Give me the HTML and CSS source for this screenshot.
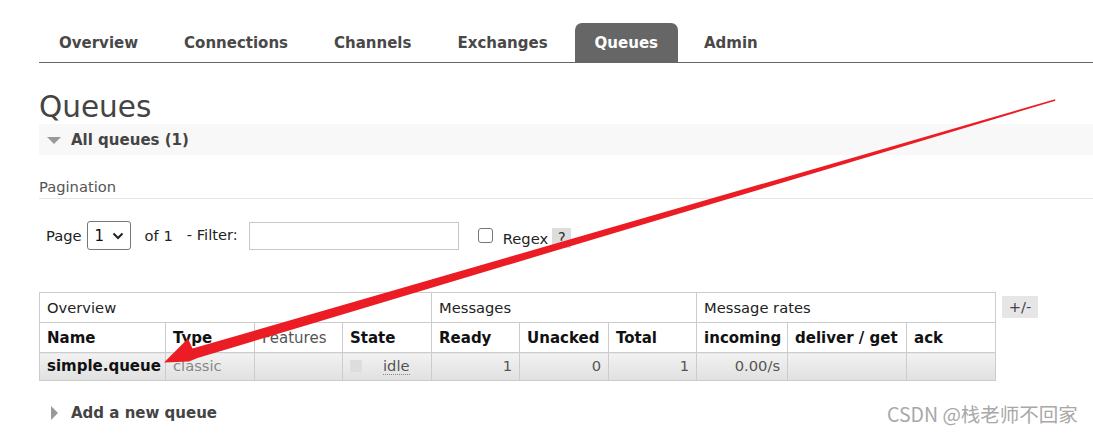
FILE: index.html
```html
<!DOCTYPE html>
<html>
<head>
<meta charset="utf-8">
<link rel="stylesheet" href="styles.css">
</head>
<body>
<div class="page">
  <nav class="tabs">
    <span class="tab">Overview</span>
    <span class="tab">Connections</span>
    <span class="tab">Channels</span>
    <span class="tab">Exchanges</span>
    <span class="tab active">Queues</span>
    <span class="tab">Admin</span>
  </nav>

  <h1 class="title">Queues</h1>

  <div class="section-bar">
    <span class="tri-down"></span>
    <span class="section-title">All queues (1)</span>
  </div>

  <h3 class="pag-title">Pagination</h3>

  <div class="controls">
    <span class="lbl-page">Page</span>
    <span class="select"><span class="sel-val">1</span><svg class="chev" width="12" height="8" viewBox="0 0 12 8"><path d="M1.5 1.5 L6 6 L10.5 1.5" fill="none" stroke="#222" stroke-width="2"/></svg></span>
    <span class="lbl-of">of 1</span>
    <span class="lbl-filter">- Filter:</span>
    <span class="input"></span>
    <span class="checkbox"></span>
    <span class="lbl-regex">Regex</span>
    <span class="help">?</span>
  </div>

  <div class="table-wrap">
    <table class="queues">
      <colgroup>
        <col class="c-name"><col class="c-type"><col class="c-feat"><col class="c-state">
        <col class="c-ready"><col class="c-unack"><col class="c-total">
        <col class="c-inc"><col class="c-deliv"><col class="c-ack">
      </colgroup>
      <thead>
        <tr class="group">
          <th colspan="4">Overview</th>
          <th colspan="3">Messages</th>
          <th colspan="3">Message rates</th>
        </tr>
        <tr class="heads">
          <th>Name</th><th>Type</th><th class="light">Features</th><th>State</th>
          <th>Ready</th><th>Unacked</th><th>Total</th>
          <th>incoming</th><th>deliver / get</th><th>ack</th>
        </tr>
      </thead>
      <tbody>
        <tr class="data">
          <td class="name">simple.queue</td>
          <td class="type">classic</td>
          <td></td>
          <td class="state"><span class="state-box"></span><span class="idle">idle</span></td>
          <td class="num">1</td>
          <td class="num">0</td>
          <td class="num">1</td>
          <td class="num">0.00/s</td>
          <td></td>
          <td></td>
        </tr>
      </tbody>
    </table>
    <span class="plusminus">+/-</span>
  </div>

  <div class="add-row">
    <span class="tri-right"></span>
    <span class="add-title">Add a new queue</span>
  </div>
</div>

<div class="watermark">CSDN @栈老师不回家</div>

<svg class="arrow" width="1093" height="436" viewBox="0 0 1093 436">
  <polygon fill="#ec1c24" points="164,362.5 188,338.5 192.5,348.5 1055,99.2 1055.4,100.8 197.5,358 189,361.5"/>
</svg>
</body>
</html>
```

FILE: styles.css
```css
html, body {
  margin: 0;
  padding: 0;
  background: #fff;
}
body {
  font-family: "DejaVu Sans", Verdana, sans-serif;
  font-size: 14.7px;
  color: #444;
  position: relative;
  width: 1093px;
  height: 436px;
  overflow: hidden;
}
.page {
  padding: 23px 0 0 39px;
}
.tabs {
  display: flex;
  height: 39px;
  border-bottom: 1px solid #666;
}
.tab {
  padding: 1px 20px 0;
  margin-right: 6px;
  line-height: 38px;
  font-weight: bold;
  font-size: 15px;
  color: #484848;
}
.tab:first-child + .tab + .tab + .tab + .tab {
  margin-left: 1px;
}
.tab.active {
  background: #666;
  color: #fff;
  border-radius: 7px 7px 0 0;
}
.title {
  margin: 28px 0 0;
  font-size: 29.5px;
  line-height: 33px;
  font-weight: normal;
  color: #444;
}
.section-bar {
  display: flex;
  align-items: center;
  height: 31px;
  background: #f8f8f8;
  padding-left: 8px;
}
.tri-down {
  width: 0;
  height: 0;
  border-left: 7px solid transparent;
  border-right: 7px solid transparent;
  border-top: 7px solid #999;
  margin-right: 10px;
  margin-top: 1px;
}
.section-title {
  font-weight: bold;
  font-size: 15px;
  color: #444;
}
.pag-title {
  margin: 22px 0 0;
  font-size: 14.7px;
  line-height: 20px;
  font-weight: normal;
  color: #555;
  padding-bottom: 1px;
  border-bottom: 1px solid #e4e4e4;
}
.controls {
  display: flex;
  align-items: center;
  height: 29px;
  margin-top: 22px;
  padding-left: 7px;
  color: #222;
}
.lbl-page { margin-right: 5px; }
.select {
  display: flex;
  align-items: center;
  box-sizing: border-box;
  width: 44px;
  height: 29px;
  border: 1px solid #767676;
  border-radius: 3px;
  padding-left: 7px;
  font-size: 15px;
  color: #111;
}
.sel-val { margin-right: 8px; }
.chev { display: block; }
.lbl-of { margin-left: 14px; }
.lbl-filter { margin-left: 14px; margin-top: -2px; }
.input {
  box-sizing: border-box;
  width: 210px;
  height: 28px;
  margin-left: 11px;
  border: 1px solid #c8c8c8;
  background: #fff;
}
.checkbox {
  box-sizing: border-box;
  width: 15px;
  height: 15px;
  margin-left: 19px;
  margin-top: -1px;
  border: 1px solid #767676;
  border-radius: 3px;
}
.lbl-regex { margin-left: 10px; margin-top: 5px; }
.help {
  margin-left: 4px;
  margin-top: 5px;
  width: 19px;
  height: 20px;
  line-height: 22px;
  font-size: 15px;
  text-align: center;
  background: #ddd;
  color: #333;
}
.table-wrap {
  display: flex;
  align-items: flex-start;
  margin-top: 42px;
}
.queues {
  border-collapse: collapse;
  table-layout: fixed;
  width: 956px;
}
.c-name { width: 126px; }
.c-type { width: 89px; }
.c-feat { width: 88px; }
.c-state { width: 89px; }
.c-ready { width: 88px; }
.c-unack { width: 89px; }
.c-total { width: 88px; }
.c-inc { width: 91px; }
.c-deliv { width: 119px; }
.c-ack { width: 89px; }
.queues th, .queues td {
  border: 1px solid #ccc;
  padding: 0 7px;
  text-align: left;
  white-space: nowrap;
  overflow: hidden;
}
.group th {
  height: 29px;
  font-weight: normal;
  font-size: 14.7px;
  color: #222;
}
.heads th {
  height: 29px;
  font-weight: bold;
  font-size: 15px;
  color: #111;
}
.heads th.light {
  font-weight: normal;
  color: #555;
}
.data td {
  height: 25px;
  padding-bottom: 2px;
  background: linear-gradient(#f2f2f2, #e0e0e0);
  color: #555;
  font-size: 14.7px;
}
.data td.name {
  font-weight: bold;
  font-size: 15px;
  color: #111;
}
.data td.type { color: #888; }
.data td.num { text-align: right; }
.state-box {
  display: inline-block;
  width: 12px;
  height: 12px;
  background: #ddd;
  vertical-align: -1px;
  margin-right: 21px;
}
.idle {
  color: #555;
  border-bottom: 1px dotted #888;
}
.plusminus {
  margin-left: 6px;
  margin-top: 4px;
  width: 36px;
  height: 22px;
  line-height: 22px;
  text-align: center;
  background: #e6e6e6;
  color: #444;
}
.add-row {
  display: flex;
  align-items: center;
  height: 20px;
  margin-top: 22px;
  padding-left: 12px;
}
.tri-right {
  width: 0;
  height: 0;
  border-top: 7px solid transparent;
  border-bottom: 7px solid transparent;
  border-left: 7px solid #999;
  margin-right: 13px;
}
.add-title {
  font-weight: bold;
  font-size: 15px;
  color: #444;
}
.watermark {
  position: absolute;
  left: 887px;
  top: 401px;
  font-family: "Noto Sans CJK SC", "DejaVu Sans", sans-serif;
  font-size: 19.5px;
  line-height: 26px;
  color: #a8a8a8;
  white-space: nowrap;
}
.arrow {
  position: absolute;
  left: 0;
  top: 0;
  pointer-events: none;
}
```
